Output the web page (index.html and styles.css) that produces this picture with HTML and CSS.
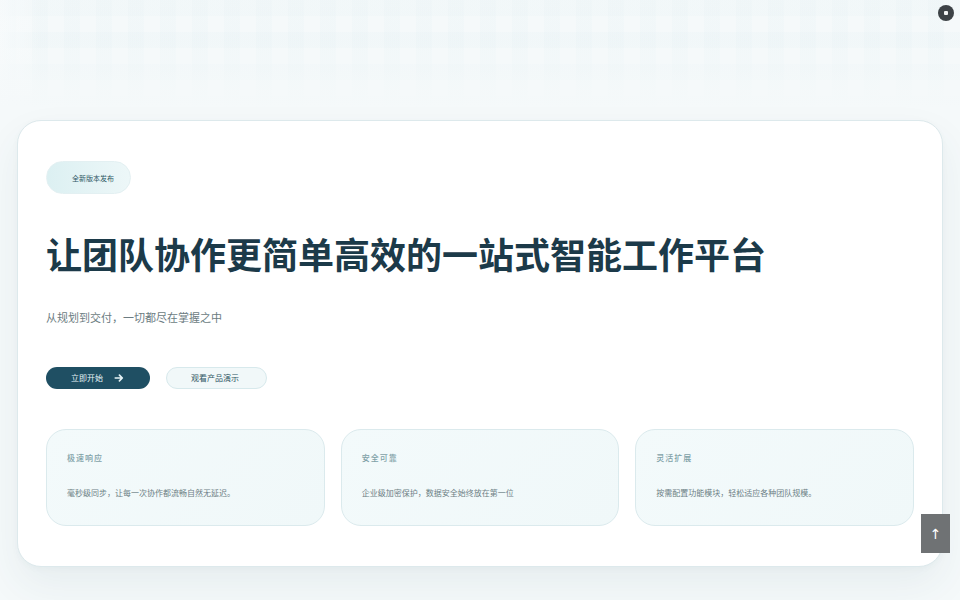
FILE: index.html
```html
<!DOCTYPE html>
<html lang="zh-CN">
<head>
<meta charset="utf-8">
<title>一站式智能工作平台</title>
<link rel="stylesheet" href="styles.css">
</head>
<body>
<div class="status-dot"><span></span></div>
<main class="page">
  <section class="hero">
    <span class="badge">全新版本发布</span>
    <h1 class="title">让团队协作更简单高效的一站式智能工作平台</h1>
    <p class="subtitle">从规划到交付，一切都尽在掌握之中</p>
    <div class="actions">
      <a class="btn btn-primary" href="#">立即开始
        <svg class="btn-arrow" viewBox="0 0 12 12" width="10" height="10" aria-hidden="true"><path d="M1.5 6h8.5M6.5 2.5L10 6l-3.5 3.5" fill="none" stroke="currentColor" stroke-width="2" stroke-linecap="round" stroke-linejoin="round"/></svg>
      </a>
      <a class="btn btn-secondary" href="#">观看产品演示</a>
    </div>
    <div class="features">
      <article class="feature">
        <h3 class="feature-label">极速响应</h3>
        <p class="feature-text">毫秒级同步，让每一次协作都流畅自然无延迟。</p>
      </article>
      <article class="feature">
        <h3 class="feature-label">安全可靠</h3>
        <p class="feature-text">企业级加密保护，数据安全始终放在第一位</p>
      </article>
      <article class="feature">
        <h3 class="feature-label">灵活扩展</h3>
        <p class="feature-text">按需配置功能模块，轻松适应各种团队规模。</p>
      </article>
    </div>
  </section>
</main>
<button class="to-top" type="button">↑</button>
</body>
</html>
```
FILE: styles.css
```css
* { box-sizing: border-box; }

html, body { height: 100%; }

body {
  margin: 0;
  font-family: "Noto Sans", "Noto Sans CJK SC", sans-serif;
  color: #1d3a48;
  background:
    linear-gradient(to bottom, rgba(245, 249, 250, 0.35) 0, rgba(245, 249, 250, 0.2) 40px, rgba(245, 249, 250, 0.75) 84px, #f5f9fa 108px),
    linear-gradient(to right, rgba(250, 252, 253, 0.8) 0, rgba(250, 252, 253, 0) 40px),
    linear-gradient(90deg, rgba(214, 232, 236, 0.14) 50%, transparent 50%),
    linear-gradient(rgba(214, 232, 236, 0.14) 50%, transparent 50%),
    #f5f9fa;
  background-size: 100% 100%, 100% 110px, 32px 32px, 32px 32px, auto;
  background-repeat: no-repeat, no-repeat, repeat, repeat, repeat;
  overflow: hidden;
}

.page { padding: 120px 17px 0; }

.hero {
  background: #ffffff;
  border: 1px solid #dde9ec;
  border-radius: 24px;
  padding: 40px 28px;
  box-shadow: 0 18px 40px rgba(40, 80, 95, 0.07), 0 2px 6px rgba(40, 80, 95, 0.03);
}

.badge {
  display: flex;
  align-items: center;
  width: 85px;
  height: 33px;
  padding: 0 0 0 25px;
  border-radius: 999px;
  background: linear-gradient(90deg, #dcf0f2, #edf7f8);
  border: 1px solid #e3f0f2;
  color: #2d5864;
  font-family: "Noto Sans CJK SC", sans-serif;
  font-size: 7px;
  line-height: 10px;
  white-space: nowrap;
}

.title {
  margin: 34px 0 0;
  font-family: "Noto Sans CJK SC", sans-serif;
  font-size: 36px;
  font-weight: 700;
  line-height: 50px;
  color: #1c3a49;
  white-space: nowrap;
}

.subtitle {
  margin: 29px 0 0;
  font-family: "Noto Sans CJK SC", sans-serif;
  font-size: 11px;
  line-height: 20px;
  color: #6c7c82;
  white-space: nowrap;
}

.actions {
  display: flex;
  gap: 16px;
  margin-top: 40px;
}

.btn {
  display: inline-flex;
  align-items: center;
  height: 22px;
  border-radius: 999px;
  font-family: "Noto Sans CJK SC", sans-serif;
  font-size: 8px;
  line-height: 12px;
  text-decoration: none;
  white-space: nowrap;
}

.btn-primary {
  gap: 11px;
  width: 104px;
  padding-left: 25px;
  background: #1f4f63;
  color: #e6f3f6;
}

.btn-arrow { display: block; }

.btn-secondary {
  width: 101px;
  padding-left: 24px;
  background: #f1f8f9;
  border: 1px solid #d7e9ec;
  color: #2d5663;
}

.features {
  display: grid;
  grid-template-columns: repeat(3, 1fr);
  gap: 16px;
  margin-top: 40px;
}

.feature {
  background: linear-gradient(135deg, #f3fafb, #f0f8f9);
  border: 1px solid #dbeaed;
  border-radius: 20px;
  padding: 20px 20px 21px;
}

.feature-label {
  margin: 0;
  font-family: "Noto Sans CJK SC", sans-serif;
  font-size: 8px;
  font-weight: 500;
  letter-spacing: 1px;
  line-height: 16px;
  color: #7fa1a7;
}

.feature-text {
  margin: 16px 0 0;
  font-family: "Noto Sans CJK SC", sans-serif;
  font-size: 8px;
  line-height: 22px;
  color: #6d7f85;
  white-space: nowrap;
}

.status-dot {
  position: fixed;
  top: 5px;
  right: 6px;
  width: 16px;
  height: 16px;
  border-radius: 50%;
  background: #3c4246;
  display: flex;
  align-items: center;
  justify-content: center;
}

.status-dot span {
  width: 4px;
  height: 4px;
  background: #f2f4f5;
  border-radius: 1px;
}

.to-top {
  position: fixed;
  right: 10px;
  bottom: 47px;
  width: 29px;
  height: 39px;
  border: 0;
  padding: 0;
  background: #6f7274;
  color: #ffffff;
  font-family: "DejaVu Sans", sans-serif;
  font-size: 14px;
  cursor: pointer;
}
```
